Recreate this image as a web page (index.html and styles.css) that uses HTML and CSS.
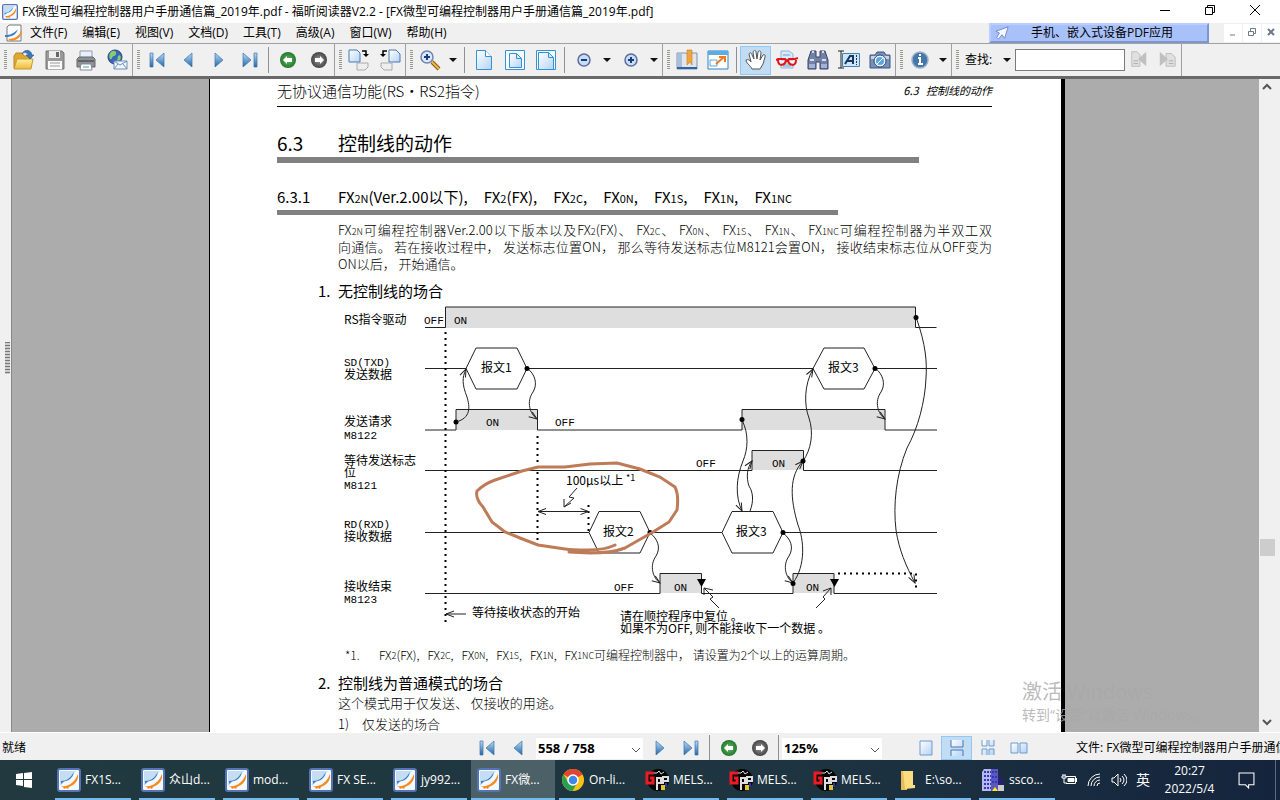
FILE: index.html
```html
<!DOCTYPE html>
<html lang="zh-CN">
<head>
    <meta charset="UTF-8">
    <meta name="viewport" content="width=device-width, initial-scale=1.0">
    <title>FX微型可编程控制器用户手册通信篇_2019年.pdf - 福昕阅读器V2.2</title>
    <link rel="stylesheet" href="styles.css">
</head>
<body>
<svg class="defs" aria-hidden="true">
    <defs>
        <linearGradient id="blue" x1="0" y1="0" x2="0" y2="1"><stop offset="0" stop-color="#b9dcf6"/><stop offset="1" stop-color="#2267a8"/></linearGradient>
        <linearGradient id="paper" x1="0" y1="0" x2="1" y2="1"><stop offset="0" stop-color="#fff"/><stop offset="1" stop-color="#b4d3f5"/></linearGradient>
        <linearGradient id="gold" x1="0" y1="0" x2="0" y2="1"><stop offset="0" stop-color="#fff0a0"/><stop offset="1" stop-color="#eeb93a"/></linearGradient>
        <radialGradient id="green"><stop offset="0" stop-color="#69bc66"/><stop offset="1" stop-color="#23762f"/></radialGradient>
        <radialGradient id="gray"><stop offset="0" stop-color="#999"/><stop offset="1" stop-color="#444"/></radialGradient>
        <marker id="tip" viewBox="0 0 10 10" refX="9" refY="5" markerWidth="10" markerHeight="10" orient="auto-start-reverse" markerUnits="userSpaceOnUse"><path d="M1 2L9 5L1 8" fill="none" stroke="#222"/></marker>
    </defs>
    <symbol id="foxit" viewBox="0 0 24 24"><rect x="1" y="1" width="22" height="22" rx="2" fill="#f4f9fd" stroke="#5573b8" stroke-width="2"/><path d="M3 3h16L3 18z" fill="#c5ddf3"/><path d="M4 13c6 0 9-3 13-9-1 5-4 8-8 9-2 0-3 1-5 3z" fill="#3c7cc4"/><path d="M4 18c8 1 14-4 17-12 1 6-3 11-9 13l-1 2-2-1-2 1-1-2z" fill="#f58a1f"/></symbol>
    <symbol id="pdf" viewBox="0 0 20 18"><path d="M5 1h12v16H3V3z" fill="#fff" stroke="#777"/><path d="M1 11c6 0 9-2 13-6-2 6-6 8-13 8z" fill="#3c7cc4"/><path d="M4 15c7 0 11-3 14-9 0 6-4 10-11 11z" fill="#f58a1f"/></symbol>
    <symbol id="open" viewBox="0 0 22 22"><path d="M1 7l2-3h6l2 3h7v12H1z" fill="#e0a92d" stroke="#b4872b"/><path d="M1 20l3-10h16l-2 10z" fill="url(#gold)" stroke="#c89a35"/><path d="M9 5c2-5 9-5 10 1h2l-4 4-4-4h2c-1-3-4-3-6-1z" fill="#3e77b8" stroke="#1c4e8b" stroke-width=".5"/></symbol>
    <symbol id="save" viewBox="0 0 22 22"><path d="M2 2h16l2 2v16H2z" fill="#999" stroke="#777"/><path d="M5 2h11v7H5z" fill="#eee"/><path d="M12 3h3v5h-3z" fill="#666"/><path d="M4 12h14v8H4z" fill="#fafafa"/><path d="M6 14h10M6 17h10" stroke="#999"/></symbol>
    <symbol id="print" viewBox="0 0 22 22"><path d="M5 2h12v7H5z" fill="#e6f1fa" stroke="#99a"/><path d="M2 10l2-2h14l2 2v8H2z" fill="#8b9198" stroke="#666"/><path d="M3 12h16" stroke="#555" stroke-width="1.500"/><path d="M6 15h10l1 6H5z" fill="#fff" stroke="#889"/><path d="M8 18h6" stroke="#39a6a7"/></symbol>
    <symbol id="mail" viewBox="0 0 22 22"><circle cx="9" cy="8" r="7" fill="#3867b7" stroke="#27417c"/><path d="M4 4c3-4 7-2 6 1s-3 1-4 4-4 0-2-5zM12 7c2-2 4 1 2 4l-3 1z" fill="#86cc70"/><path d="M8 12h13v8H8z" fill="#eef5ff" stroke="#6f8fb8"/><path d="M8 12l6 4 7-4M8 20l4-5m9 5l-4-5" fill="none" stroke="#6f8fb8"/></symbol>
    <symbol id="prev" viewBox="0 0 22 22"><path d="M15 4v14L7 11z" fill="url(#blue)" stroke="#3b73aa" stroke-width=".7"/></symbol>
    <symbol id="next" viewBox="0 0 22 22"><path d="M7 4v14l8-7z" fill="url(#blue)" stroke="#3b73aa" stroke-width=".7"/></symbol>
    <symbol id="first" viewBox="0 0 22 22"><path d="M4 4h3v14H4zM18 4v14l-8-7z" fill="url(#blue)" stroke="#3b73aa" stroke-width=".7"/></symbol>
    <symbol id="last" viewBox="0 0 22 22"><path d="M15 4h3v14h-3zM4 4v14l8-7z" fill="url(#blue)" stroke="#3b73aa" stroke-width=".7"/></symbol>
    <symbol id="back" viewBox="0 0 22 22"><circle cx="11" cy="11" r="8" fill="url(#green)"/><path d="M6 11l4-4v2h5v4h-5v2z" fill="#fff"/></symbol>
    <symbol id="fwd" viewBox="0 0 22 22"><circle cx="11" cy="11" r="8" fill="url(#gray)"/><path d="M16 11l-4-4v2H7v4h5v2z" fill="#fff"/></symbol>
    <symbol id="turnr" viewBox="0 0 22 22"><path d="M1 1h8l3 3v9H1z" fill="url(#paper)" stroke="#4679b4"/><path d="M9 14h11v4l-3 3H9z" fill="#eee" stroke="#aaa"/><path d="M14 2h4v5" fill="none" stroke="#000" stroke-width="1.500"/><path d="M15 5h6l-3 3z"/></symbol>
    <symbol id="turnl" viewBox="0 0 22 22"><path d="M10 1h7l4 4v8H10z" fill="url(#paper)" stroke="#4679b4"/><path d="M2 14h11v7H5l-3-3z" fill="#eee" stroke="#aaa"/><path d="M8 2H4v5" fill="none" stroke="#000" stroke-width="1.500"/><path d="M1 5h6L4 8z"/></symbol>
    <symbol id="zoom" viewBox="0 0 22 22"><path d="M13 13l7 7" stroke="#8a5a16" stroke-width="4"/><path d="M13 13l7 7" stroke="#efb944" stroke-width="2"/><circle cx="8" cy="8" r="6" fill="#d9ebfb" stroke="#7183ac" stroke-width="1.500"/><path d="M5 8h6M8 5v6" stroke="#1d3b86" stroke-width="2"/></symbol>
    <symbol id="page" viewBox="0 0 22 22"><path d="M3.500 1.500h9l6 6v13h-15z" fill="url(#paper)" stroke="#3492d5"/><path d="M12.500 1.500v6h6" fill="#fff" stroke="#3492d5"/></symbol>
    <symbol id="fitpage" viewBox="0 0 22 22"><path d="M1.500 1.500h19v19h-19z" fill="#f5fbff" stroke="#3492d5"/><path d="M5.500 4.500h7l5 5v9h-12z" fill="url(#paper)" stroke="#3492d5"/><path d="M12.500 4.500v5h5" fill="none" stroke="#3492d5"/></symbol>
    <symbol id="fitwidth" viewBox="0 0 22 22"><path d="M1.500 1.500h19v19h-19z" fill="#f5fbff" stroke="#3492d5"/><path d="M3.500 3.500h10l5 5v12h-15z" fill="url(#paper)" stroke="#3492d5"/><path d="M13.500 3.500v5h5" fill="none" stroke="#3492d5"/></symbol>
    <symbol id="minus" viewBox="0 0 22 22"><circle cx="11" cy="11" r="6" fill="#c9def3" stroke="#5a6f9b" stroke-width="1.500"/><path d="M8 11h6" stroke="#173a81" stroke-width="2"/></symbol>
    <symbol id="plus" viewBox="0 0 22 22"><circle cx="11" cy="11" r="6" fill="#c9def3" stroke="#5a6f9b" stroke-width="1.500"/><path d="M8 11h6M11 8v6" stroke="#173a81" stroke-width="2"/></symbol>
    <symbol id="bookmark" viewBox="0 0 22 22"><path d="M1 4h9l1 1 1-1h9v16H1z" fill="#e2e6ec" stroke="#7d93b3"/><path d="M1 18h20v2H1z" fill="#2f65a8"/><path d="M2 5h4v13H2z" fill="#a6c0de"/><path d="M11 1h5v15l-2-3-3 3z" fill="#f0a63c" stroke="#c98835" stroke-width=".7"/></symbol>
    <symbol id="full" viewBox="0 0 22 22"><path d="M1 2h20v18H1z" fill="#fff" stroke="#2c83c8"/><path d="M1 2h20v4H1z" fill="#5eabdf"/><path d="M3 11h7v6H3z" fill="#fff" stroke="#58a8dc"/><path d="M9 15l8-7M12 8h6v5" fill="none" stroke="#f07820" stroke-width="2"/></symbol>
    <symbol id="hand" viewBox="0 0 22 22"><path d="M7 20C5 16 1 14 1 11c2-1 4 0 5 2L4 5c1-2 3-1 3 1l2 4-1-7c1-2 3-2 3 0l1 7 1-7c1-2 3-1 3 1l-1 7 3-5c1-1 3 0 2 2l-2 7-3 5z" fill="#fff" stroke="#555"/></symbol>
    <symbol id="glasses" viewBox="0 0 22 22"><path d="M5 2h8l4 3v6H5zM5 15h12v4H5z" fill="#d7eaf8" stroke="#8bb4d8"/><path d="M7 6h7M7 17h8" stroke="#6aa2cf"/><path d="M0 11l2-1h7l2 2 2-2h6l3-1M2 11c0 7 7 6 8 0m2 0c1 6 8 7 8 0" fill="none" stroke="#e1161c" stroke-width="2"/></symbol>
    <symbol id="binoc" viewBox="0 0 22 22"><path d="M4 2h5v6h4V2h5l3 9v9h-8v-7H9v7H1v-9z" fill="#7381a4" stroke="#39436a"/><path d="M5 3h2M15 3h2M3 11h4M15 11h4" stroke="#d6def0" stroke-width="2"/><path d="M2 15h6v4H2zM14 15h6v4h-6z" fill="#a2b2d4"/></symbol>
    <symbol id="seltext" viewBox="0 0 22 22"><path d="M0 2h6M3 2v17M0 19h6" stroke="#222" fill="none"/><path d="M4.500 4.500h17v13h-17z" fill="#cbe6fa" stroke="#4083bb"/><path d="M7 15l5-8h3v8M9 12h5" fill="none" stroke="#163861" stroke-width="2"/><path d="M18.500 6v10" stroke="#333" stroke-dasharray="2 1"/></symbol>
    <symbol id="camera" viewBox="0 0 22 22"><path d="M1 6h5l2-3h7l2 3h4v13H1z" fill="#7790b6" stroke="#3c5682"/><path d="M2 7h18v3H2z" fill="#c5d4e8"/><circle cx="11" cy="12" r="6" fill="#e9f2fa" stroke="#304771"/><circle cx="11" cy="12" r="4" fill="#5aa6de"/><path d="M8 15l6-6" stroke="#fff"/></symbol>
    <symbol id="info" viewBox="0 0 22 22"><circle cx="11" cy="11" r="8" fill="#4677ab" stroke="#9ab2cb" stroke-width="1.500"/><path d="M11 5v2M9 9h2v6M9 15h5" fill="none" stroke="#fff" stroke-width="2"/></symbol>
    <symbol id="findprev" viewBox="0 0 22 22"><path d="M3 3h6l3 3v13H3z" fill="#e0e0e0" stroke="#bbb"/><path d="M19 3v16l-9-8z" fill="#c0c0c0"/><path d="M5 13h5M5 16h5" stroke="#aaa"/></symbol>
    <symbol id="findnext" viewBox="0 0 22 22"><path d="M10 5h6l4 4v10H10z" fill="#e0e0e0" stroke="#bbb"/><path d="M3 3v16l9-8z" fill="#c0c0c0"/><path d="M13 13h5M13 16h5" stroke="#aaa"/></symbol>
    <symbol id="single" viewBox="0 0 22 22"><path d="M5 4h12v14H5z" fill="url(#paper)" stroke="#6d9bd0"/></symbol>
    <symbol id="cont" viewBox="0 0 22 22"><path d="M5 3v7h12V3M5 19v-6h12v6" fill="url(#paper)" stroke="#4679b4"/></symbol>
    <symbol id="facing" viewBox="0 0 22 22"><path d="M5 3v6h5V3M12 3v6h5V3M5 18v-6h5v6M12 18v-6h5v6" fill="url(#paper)" stroke="#6d9bd0"/></symbol>
    <symbol id="two" viewBox="0 0 22 22"><path d="M3 6h7v10H3zM12 6h7v10h-7z" fill="url(#paper)" stroke="#6d9bd0"/></symbol>
    <symbol id="chrome" viewBox="0 0 24 24"><circle cx="12" cy="12" r="11" fill="#fbc116"/><path d="M12 12L2.500 6.500a11 11 0 0 1 19 0z" fill="#df4434"/><path d="M2.500 6.500a11 11 0 0 0 9 16.500l5-8.500H7.500z" fill="#2a9f51"/><circle cx="12" cy="12" r="5" fill="#4285e8" stroke="#fff" stroke-width="1.500"/></symbol>
    <symbol id="gpp" viewBox="0 0 24 24"><circle cx="13" cy="12" r="11" fill="#050505"/><path d="M9 5h3l2-2 2 3 3-2" stroke="#ddd" fill="none"/><path d="M9 5H2v10h6v-5H5" fill="none" stroke="#ed1c24" stroke-width="3"/><path d="M12 22V10h4v5h-4M18 16V9h5v4h-5" fill="none" stroke="#ddd" stroke-width="2"/><path d="M16 17h4v5h-4z" fill="#e5c520"/><path d="M20 15h2v4h-2z" fill="#2737b8"/></symbol>
    <symbol id="folder" viewBox="0 0 24 24"><path d="M4 3h6v19H4z" fill="#e9bd55"/><path d="M6 3h10v14h2v3l-10 1z" fill="#fbdc7e"/></symbol>
    <symbol id="sscom" viewBox="0 0 24 24"><path d="M3 1h8v22H1V4z" fill="#b6b9ec"/><path d="M10 1h7v22h-7z" fill="#5d59b8"/><path d="M17 6l6 7v10h-6z" fill="#23236b"/><path d="M3 4h7M3 8h7M3 12h7M3 16h7M3 20h7M11 4h5M11 9h5M11 14h5" stroke="#3337c9" stroke-dasharray="2 1" stroke-width="2"/><path d="M17 17h6v6h-6z" fill="#ccc"/><path d="M11 23l3-4 3 4z" fill="#ffee20"/></symbol>
</svg>

<header class="titlebar">
    <svg class="app-icon"><use href="#foxit"/></svg>
    <span class="title">FX微型可编程控制器用户手册通信篇_2019年.pdf - 福昕阅读器V2.2 - [FX微型可编程控制器用户手册通信篇_2019年.pdf]</span>
    <button class="win" aria-label="最小化"><svg viewBox="0 0 12 12"><path d="M1 6.500h10"/></svg></button>
    <button class="win" aria-label="还原"><svg viewBox="0 0 12 12"><path d="M1.500 3.500h7v7h-7zM3.500 3V1.500h7v7H9"/></svg></button>
    <button class="win" aria-label="关闭"><svg viewBox="0 0 12 12"><path d="M1 1l10 10M11 1L1 11"/></svg></button>
</header>

<nav class="menubar">
    <svg class="doc-icon"><use href="#pdf"/></svg>
    <button>文件(F)</button>
    <button>编辑(E)</button>
    <button>视图(V)</button>
    <button>文档(D)</button>
    <button>工具(T)</button>
    <button>高级(A)</button>
    <button>窗口(W)</button>
    <button>帮助(H)</button>
    <a class="banner" href="#"><svg viewBox="0 0 16 16"><path d="M15 1L1 6l4 2-3 5 2 2 4-5 3 4z" fill="#f5f8ff" stroke="#6b7fd0"/></svg><span>手机、嵌入式设备PDF应用</span></a>
    <div class="mdi">
        <button aria-label="最小化文档"><svg viewBox="0 0 10 10"><path d="M2 8h5"/></svg></button>
        <button aria-label="还原文档"><svg viewBox="0 0 10 10"><path d="M1.500 4.500h5v4h-5zM3.500 4V1.500h5v5H7"/></svg></button>
        <button aria-label="关闭文档"><svg viewBox="0 0 10 10"><path d="M2 2l6 6M8 2L2 8" stroke-width="2"/></svg></button>
    </div>
</nav>

<div class="toolbar">
    <div class="group">
        <button class="tool" aria-label="打开"><svg><use href="#open"/></svg></button>
        <button class="tool" aria-label="保存"><svg><use href="#save"/></svg></button>
        <button class="tool" aria-label="打印"><svg><use href="#print"/></svg></button>
        <button class="tool" aria-label="邮件"><svg><use href="#mail"/></svg></button>
    </div>
    <div class="group">
        <button class="tool" aria-label="第一页"><svg><use href="#first"/></svg></button>
        <button class="tool" aria-label="上一页"><svg><use href="#prev"/></svg></button>
        <button class="tool" aria-label="下一页"><svg><use href="#next"/></svg></button>
        <button class="tool" aria-label="最后一页"><svg><use href="#last"/></svg></button>
        <i class="sep"></i>
        <button class="tool" aria-label="后退"><svg><use href="#back"/></svg></button>
        <button class="tool" aria-label="前进"><svg><use href="#fwd"/></svg></button>
    </div>
    <div class="group">
        <button class="tool" aria-label="顺时针旋转"><svg><use href="#turnr"/></svg></button>
        <button class="tool" aria-label="逆时针旋转"><svg><use href="#turnl"/></svg></button>
    </div>
    <div class="group">
        <button class="tool" aria-label="缩放工具"><svg><use href="#zoom"/></svg></button>
        <button class="drop" aria-label="缩放选项"></button>
        <i class="sep"></i>
        <button class="tool" aria-label="实际大小"><svg><use href="#page"/></svg></button>
        <button class="tool" aria-label="适合页面"><svg><use href="#fitpage"/></svg></button>
        <button class="tool" aria-label="适合宽度"><svg><use href="#fitwidth"/></svg></button>
        <i class="sep"></i>
        <button class="tool" aria-label="缩小"><svg><use href="#minus"/></svg></button>
        <button class="drop" aria-label="缩小选项"></button>
        <button class="tool" aria-label="放大"><svg><use href="#plus"/></svg></button>
        <button class="drop" aria-label="放大选项"></button>
    </div>
    <div class="group">
        <button class="tool" aria-label="书签"><svg><use href="#bookmark"/></svg></button>
        <button class="tool" aria-label="全屏"><svg><use href="#full"/></svg></button>
        <i class="sep"></i>
        <button class="tool active" aria-label="手形工具"><svg><use href="#hand"/></svg></button>
        <button class="tool" aria-label="阅读"><svg><use href="#glasses"/></svg></button>
        <button class="tool" aria-label="查找"><svg><use href="#binoc"/></svg></button>
        <button class="tool" aria-label="选择文本"><svg><use href="#seltext"/></svg></button>
        <button class="tool" aria-label="快照"><svg><use href="#camera"/></svg></button>
    </div>
    <div class="group">
        <button class="tool" aria-label="信息"><svg><use href="#info"/></svg></button>
        <button class="drop" aria-label="信息选项"></button>
    </div>
    <div class="group find">
        <label for="find">查找:</label>
        <button class="drop" aria-label="查找选项"></button>
        <input type="text" id="find">
        <button class="mini" aria-label="查找上一个"><svg><use href="#findprev"/></svg></button>
        <button class="mini" aria-label="查找下一个"><svg><use href="#findnext"/></svg></button>
    </div>
</div>

<main class="viewer">
    <div class="splitter"><i></i></div>
    <div class="canvas">
        <article class="page">
            <div class="running"><span>无协议通信功能(RS・RS2指令)</span><em>6.3&nbsp;&nbsp; 控制线的动作</em></div>
            <h2><span class="num">6.3</span>控制线的动作</h2>
            <h3><span class="num">6.3.1</span><span class="models"><span>FX<small>2N</small>(Ver.2.00以下),</span> <span>FX<small>2</small>(FX),</span> <span>FX<small>2C</small>,</span> <span>FX<small>0N</small>,</span> <span>FX<small>1S</small>,</span> <span>FX<small>1N</small>,</span> <span>FX<small>1NC</small></span></span></h3>
            <div class="intro">
                <p>FX<small>2N</small>可编程控制器Ver.2.00以下版本以及FX<small>2</small>(FX)、 FX<small>2C</small>、 FX<small>0N</small>、 FX<small>1S</small>、 FX<small>1N</small>、 FX<small>1NC</small>可编程控制器为半双工双</p>
                <p>向通信。 若在接收过程中， 发送标志位置ON， 那么等待发送标志位M8121会置ON， 接收结束标志位从OFF变为</p>
                <p class="end">ON以后， 开始通信。</p>
            </div>
            <h4><span>1.</span>无控制线的场合</h4>

            <svg class="timing" viewBox="338 302 620 340">
                <g class="level">
                    <path d="M445.500 307h470v21h-470zM456 409.500h81.500V430H456zM742 409.500h143V430H742zM752 450.500h51.500V470H752zM660 573h41.500v20H660zM793 573h41v20h-41z"/>
                </g>
                <g class="line">
                    <path d="M425 327.500h20.500V307h470v20.500h21"/>
                    <path d="M425 368.500h41l10-20.500h41l10 20.500-10 20.500h-41l-10-20.500M527 368.500h286l11-20.500h40l11 20.500-11 20.500h-40l-11-20.500M875 368.500h62"/>
                    <path d="M425 430h31v-20.500h81.500V430H742v-20.500h143V430h52"/>
                    <path d="M425 470.500h327v-20h51.500v20H937"/>
                    <path d="M425 532.500h164l10-21h41l10 21-10 20.500h-41l-10-20.500M650 532.500h72l10-21h41l10 21-10 20.500h-41l-10-20.500M783 532.500h154"/>
                    <path d="M425 593.500h235V573.500h41.500v20H793v-20h41v20h103"/>
                    <path d="M577 488l-8 9 5 1-10 9M564 499v8l7-4M719 608l-9-9 3-2-9-9M704 595v-7l9 2M816 608l9-9-2-2 8-9M823 591l8-3v7"/>
                </g>
                <g class="dots">
                    <path d="M445.500 332v290M537.500 436v106M588.500 505v28M838 573.500h78v16"/>
                </g>
                <g class="arrow">
                    <path d="M456 422C471 418 470 407 467 397C462 384 462 378 466 369"/>
                    <path d="M527 368C535 374 538 384 533 392C526 402 530 414 537 419"/>
                    <path d="M916 317C926 345 927 362 926 378C925 402 918 428 907 448C896 475 893 505 896 530C899 550 906 566 915 583"/>
                    <path d="M742 420C749 434 748 449 743 461C736 478 735 496 742 511"/>
                    <path d="M750 511C754 501 753 492 749 486C746 477 747 468 752 461"/>
                    <path d="M803 461C811 450 814 433 809 418C804 405 804 385 813 369"/>
                    <path d="M875 368C883 374 886 384 881 392C874 402 878 414 885 419"/>
                    <path d="M650 533C658 539 661 548 656 556C649 566 653 578 660 583"/>
                    <path d="M783 533C791 539 794 548 789 556C782 566 786 578 793 583"/>
                    <path d="M793 583C806 565 804 540 798 525C790 498 789 476 803 461"/>
                    <path d="M466 614h-20"/>
                    <path class="both" d="M538 511.500h50.500"/>
                </g>
                <g class="dot">
                    <circle cx="456" cy="422" r="2.500"/><circle cx="527" cy="368.500" r="2.500"/><circle cx="916" cy="317.500" r="2.500"/><circle cx="742" cy="419.500" r="2.500"/><circle cx="803" cy="461" r="2.500"/><circle cx="875" cy="368.500" r="2.500"/><circle cx="650" cy="532.500" r="2.500"/><circle cx="783" cy="532.500" r="2.500"/><circle cx="793" cy="583.500" r="2.500"/>
                    <path d="M697 579h9l-4.500 8zM830 579h9l-4.500 8z"/>
                </g>
                <g class="label">
                    <text x="344" y="324">RS指令驱动</text>
                    <text x="344" y="366" class="mono">SD(TXD)</text><text x="344" y="379">发送数据</text>
                    <text x="344" y="426">发送请求</text><text x="344" y="439" class="mono">M8122</text>
                    <text x="344" y="465">等待发送标志</text><text x="344" y="477">位</text><text x="344" y="489" class="mono">M8121</text>
                    <text x="344" y="528" class="mono">RD(RXD)</text><text x="344" y="541">接收数据</text>
                    <text x="344" y="591">接收结束</text><text x="344" y="603" class="mono">M8123</text>
                    <text x="424" y="324" class="mono">OFF</text><text x="454" y="324" class="mono">ON</text>
                    <text x="481" y="372">报文1</text><text x="828" y="372">报文3</text>
                    <text x="486" y="426" class="mono">ON</text><text x="555" y="426" class="mono">OFF</text>
                    <text x="696" y="467" class="mono">OFF</text><text x="772" y="467" class="mono">ON</text>
                    <text x="566" y="485">100μs以上</text><text x="626" y="481" class="sup">*1</text>
                    <text x="603" y="536">报文2</text><text x="736" y="536">报文3</text>
                    <text x="614" y="591" class="mono">OFF</text><text x="674" y="591" class="mono">ON</text><text x="806" y="591" class="mono">ON</text>
                    <text x="472" y="617">等待接收状态的开始</text>
                    <text x="620" y="621">请在顺控程序中复位 。</text>
                    <text x="620" y="633">如果不为OFF, 则不能接收下一个数据 。</text>
                </g>
                <path class="pen" d="M615 545Q605 550 588 550T565 549L538 545L520 538L505 532L492 522L483 507Q475 498 477 491Q484 484 495 480L522 471L538 467H565L590 464L617 463L640 469L660 477L675 487Q679 495 677 510L669 522L653 532L625 548Q612 553 590 553L569 552"/>
            </svg>

            <p class="note"><span>*1.</span>FX<small>2</small>(FX),   FX<small>2C</small>,   FX<small>0N</small>,   FX<small>1S</small>,   FX<small>1N</small>,   FX<small>1NC</small>可编程控制器中， 请设置为2个以上的运算周期。</p>
            <h4 class="next"><span>2.</span>控制线为普通模式的场合</h4>
            <p class="text">这个模式用于仅发送、 仅接收的用途。</p>
            <p class="text item"><span>1)</span>仅发送的场合</p>
        </article>
        <div class="watermark"><div>激活 Windows</div><p>转到“设置”以激活 Windows。</p></div>
    </div>
    <div class="scroll">
        <button aria-label="向上"><svg viewBox="0 0 10 10"><path d="M1 7l4-4 4 4"/></svg></button>
        <i class="thumb"></i>
        <button aria-label="向下"><svg viewBox="0 0 10 10"><path d="M1 3l4 4 4-4"/></svg></button>
    </div>
</main>

<footer class="status">
    <span class="ready">就绪</span>
    <button class="tool" aria-label="第一页"><svg><use href="#first"/></svg></button>
    <button class="tool" aria-label="上一页"><svg><use href="#prev"/></svg></button>
    <div class="combo pages">
        <select aria-label="页码"><option>558 / 758</option></select>
        <svg viewBox="0 0 10 10"><path d="M1 3l4 4 4-4"/></svg>
    </div>
    <button class="tool" aria-label="下一页"><svg><use href="#next"/></svg></button>
    <button class="tool" aria-label="最后一页"><svg><use href="#last"/></svg></button>
    <i class="sep"></i>
    <button class="tool" aria-label="后退"><svg><use href="#back"/></svg></button>
    <button class="tool" aria-label="前进"><svg><use href="#fwd"/></svg></button>
    <i class="sep"></i>
    <div class="combo">
        <select aria-label="缩放"><option>125%</option></select>
        <svg viewBox="0 0 10 10"><path d="M1 3l4 4 4-4"/></svg>
    </div>
    <div class="views">
        <button class="tool" aria-label="单页"><svg><use href="#single"/></svg></button>
        <button class="tool active" aria-label="连续"><svg><use href="#cont"/></svg></button>
        <button class="tool" aria-label="连续对开"><svg><use href="#facing"/></svg></button>
        <button class="tool" aria-label="对开"><svg><use href="#two"/></svg></button>
    </div>
    <span class="file">文件: FX微型可编程控制器用户手册通信篇_2019年.pdf</span>
</footer>

<div class="taskbar">
    <button class="start" aria-label="开始"><svg viewBox="0 0 16 16"><path d="M0 2l7-1v6H0zM8 1l8-1v7H8zM0 8h7v6l-7-1zM8 8h8v8l-8-1z" fill="#fff"/></svg></button>
    <div class="tasks">
        <button><svg><use href="#foxit"/></svg><span>FX1S...</span></button>
        <button><svg><use href="#foxit"/></svg><span>众山d...</span></button>
        <button><svg><use href="#foxit"/></svg><span>mod...</span></button>
        <button><svg><use href="#foxit"/></svg><span>FX SE...</span></button>
        <button><svg><use href="#foxit"/></svg><span>jy992...</span></button>
        <button class="current"><svg><use href="#foxit"/></svg><span>FX微...</span></button>
        <button><svg><use href="#chrome"/></svg><span>On-li...</span></button>
        <button><svg><use href="#gpp"/></svg><span>MELS...</span></button>
        <button><svg><use href="#gpp"/></svg><span>MELS...</span></button>
        <button><svg><use href="#gpp"/></svg><span>MELS...</span></button>
        <button><svg><use href="#folder"/></svg><span>E:\so...</span></button>
        <button><svg><use href="#sscom"/></svg><span>ssco...</span></button>
    </div>
    <div class="tray">
        <svg viewBox="0 0 16 16"><path d="M5 4.500h9.500v7H5M15.500 6v4"/><path d="M7 6.500h6v3H7z" fill="#fff"/><path d="M1 4v2h4V4zM3 6v5h3M2 2v2M4 2v2"/></svg>
        <svg viewBox="0 0 16 16"><path d="M2 14A12 12 0 0 1 14 2M5 14a9 9 0 0 1 9-9M8 14a6 6 0 0 1 6-6M11 14a3 3 0 0 1 3-3"/></svg>
        <svg viewBox="0 0 16 16"><path d="M1 6h2l4-4v12l-4-4H1zM9 6q2 2 0 4M11 4q4 4 0 8M13 2q6 6 0 12"/></svg>
        <span>英</span>
    </div>
    <div class="clock"><time>20:27</time><span>2022/5/4</span></div>
    <button class="notice" aria-label="通知"><svg viewBox="0 0 16 16"><path d="M1 1h14v11h-5v3l-3-3H1z" fill="none" stroke="#fff"/></svg></button>
    <i class="desktop"></i>
</div>
</body>
</html>
```
FILE: styles.css
```css
* {
    box-sizing: border-box;
}

body, button, input, select {
    font-family: 'Open Sans', 'Noto Sans CJK SC', sans-serif;
    font-size: 12px;
    line-height: 16px;
    color: #000;
}

body {
    display: flex;
    flex-direction: column;
    height: 100vh;
    margin: 0;
    overflow: hidden;
    background-color: #f0f0f0;
}

button {
    border: 0;
    padding: 0;
    background: none;
}

h2, h3, h4, p {
    margin: 0;
}

h2, h3, h4 {
    font-weight: normal;
}

.defs {
    position: absolute;
    width: 0;
    height: 0;
}

/* title and menus */
.titlebar {
    display: flex;
    align-items: center;
    flex: 0 0 23px;
    background-color: #fff;
}

.app-icon {
    width: 16px;
    height: 16px;
    margin: 0 4px 0 2px;
}

.title {
    flex: 1;
    white-space: nowrap;
}

.win {
    width: 45px;
    height: 22px;
}

.win svg {
    width: 12px;
    height: 12px;
    fill: none;
    stroke: #000;
}

.titlebar .win:last-child {
    margin-right: 3px;
}

.menubar {
    display: flex;
    align-items: center;
    flex: 0 0 20px;
    gap: 15px;
}

.doc-icon {
    width: 20px;
    height: 18px;
    margin: 0 -9px 0 4px;
}

.banner {
    display: flex;
    align-items: center;
    width: 220px;
    height: 20px;
    margin-left: auto;
    border: 2px solid;
    border-color: #bdcdff #7d96d0 #7d96d0 #bdcdff;
    background-color: #a9c1fb;
    color: #000;
    text-decoration: none;
}

.banner svg {
    width: 14px;
    height: 14px;
    margin-left: 4px;
}

.banner span {
    flex: 1;
    padding-right: 12px;
    text-align: center;
}

.mdi {
    display: flex;
    gap: 1px;
}

.mdi button {
    width: 18px;
    height: 18px;
    background-color: #fff;
}

.mdi svg {
    width: 10px;
    height: 10px;
    fill: none;
    stroke: #6c7a89;
}

/* toolbars */
.toolbar {
    display: flex;
    flex: 0 0 33px;
    border-top: 1px solid #a0a0a0;
}

.group {
    display: flex;
    align-items: center;
    border-right: 1px solid #a0a0a0;
}

.group::before {
    content: '';
    width: 3px;
    height: 20px;
    margin: 0 1px 0 4px;
    background: repeating-linear-gradient(#9a9a8c 0 1px, #f0f0f0 1px 2px);
}

.tool {
    display: flex;
    align-items: center;
    justify-content: center;
    width: 31px;
    height: 29px;
}

.tool svg {
    width: 22px;
    height: 22px;
}

.active {
    border: 1px solid #90c8f6;
    background-color: #c2dcf3;
}

.sep {
    width: 1px;
    height: 26px;
    margin: 0 3px;
    background-color: #909090;
}

.drop {
    width: 16px;
    height: 20px;
}

.drop::before {
    content: '';
    display: block;
    width: 0;
    margin: auto;
    border: 4px solid transparent;
    border-top-color: #111;
    border-bottom: 0;
}

.find label {
    margin: 0 7px 0 5px;
}

.find input {
    width: 110px;
    height: 22px;
    border: 1px solid #7a7a7a;
    background-color: #fff;
}

.mini {
    width: 28px;
    height: 22px;
}

.mini svg {
    width: 20px;
    height: 20px;
}

/* document area */
.viewer {
    display: flex;
    flex: 1;
    min-height: 0;
    border-top: 3px solid #696969;
    border-bottom: 1px solid #fff;
}

.splitter {
    display: flex;
    align-items: center;
    justify-content: flex-end;
    width: 12px;
    padding: 0 1px 96px 0;
    border-right: 1px solid #888;
}

.splitter i {
    width: 5px;
    height: 32px;
    background: repeating-linear-gradient(#777 0 1px, #ccc 1px 3px);
}

.canvas {
    position: relative;
    flex: 1;
    padding-left: 3px;
    overflow: hidden;
    background-color: #acacac;
}

.page {
    width: 856px;
    min-height: 100%;
    margin: 0 auto;
    padding: 0 69px 0 67px;
    border-left: 1px solid #000;
    border-right: 4px solid #000;
    background-color: #fff;
    font-family: 'Noto Sans CJK SC', sans-serif;
    font-size: 13px;
    line-height: 17px;
}

.running {
    display: flex;
    justify-content: space-between;
    border-bottom: 1px solid #000;
    padding-bottom: 4px;
    font-size: 15px;
    font-weight: 300;
    line-height: 23px;
}

.running em {
    font-size: 11px;
    font-weight: normal;
}

h2 {
    display: flex;
    width: 642px;
    margin-top: 23px;
    border-bottom: 6px solid #808080;
    padding-bottom: 2px;
    font-size: 19px;
    line-height: 25px;
}

.num {
    width: 61px;
}

h3 {
    display: flex;
    width: 561px;
    margin-top: 21px;
    border-bottom: 5px solid #808080;
    padding-bottom: 1px;
    font-size: 15px;
    line-height: 25px;
}

.models {
    display: flex;
    flex: 1;
    justify-content: space-between;
    padding-right: 46px;
}

small {
    font-size: 11px;
    line-height: 1px;
}

.intro {
    padding: 6px 0 0 61px;
    font-weight: 300;
}

.intro p {
    text-align: justify;
    text-align-last: justify;
    white-space: nowrap;
}

.intro .end {
    text-align-last: left;
}

.intro small {
    font-size: 9px;
}

h4 {
    display: flex;
    margin: 8px 0 0 41px;
    font-size: 15px;
    line-height: 22px;
}

h4 span {
    width: 20px;
}

h4.next {
    margin-top: 6px;
}

.timing {
    display: block;
    width: 620px;
    height: 340px;
    margin-left: 61px;
}

.level {
    fill: #dedede;
}

.line, .arrow {
    fill: none;
    stroke: #222;
}

.arrow path {
    marker-end: url(#tip);
}

.arrow .both {
    marker-start: url(#tip);
}

.dots {
    fill: none;
    stroke: #000;
    stroke-width: 2;
    stroke-dasharray: 2 4;
}

.label {
    font-size: 12px;
}

.label .mono {
    font-family: 'Liberation Mono', monospace;
    font-size: 11px;
}

.label .sup {
    font-size: 9px;
}

.pen {
    fill: none;
    stroke: #bd7b58;
    stroke-width: 3;
    stroke-linecap: round;
}

.note {
    display: flex;
    margin: 4px 0 0 68px;
    font-size: 12px;
    font-weight: 300;
    line-height: 18px;
    white-space: pre;
}

.note small {
    font-size: 9px;
    line-height: 20px;
}

.note span {
    width: 34px;
}

.text {
    margin-left: 61px;
    font-weight: 300;
}

.item {
    display: flex;
    margin-top: 4px;
}

.item span {
    width: 24px;
}

.watermark {
    position: absolute;
    right: 40px;
    bottom: 7px;
    width: 197px;
    color: rgba(168, 168, 168, 0.8);
    font-size: 14px;
    line-height: 20px;
    white-space: nowrap;
}

.watermark div {
    font-size: 20px;
    line-height: 26px;
}

.scroll {
    display: flex;
    flex-direction: column;
    align-items: center;
    width: 16px;
    margin-right: 5px;
}

.scroll button {
    width: 16px;
    height: 18px;
}

.scroll svg, .combo svg {
    width: 10px;
    height: 10px;
    fill: none;
    stroke: #555;
    stroke-width: 2;
}

.thumb {
    width: 15px;
    height: 17px;
    margin: 442px 0 auto;
    background-color: #cdcdcd;
}

/* status bar */
.status {
    display: flex;
    align-items: center;
    flex: 0 0 27px;
    overflow: hidden;
    padding-top: 3px;
}

.ready {
    width: 471px;
    padding-left: 2px;
}

.status .tool {
    flex: none;
    height: 24px;
}

.combo {
    position: relative;
    width: 100px;
    height: 21px;
}

.combo.pages {
    width: 107px;
    margin: 0 1px 0 3px;
}

.combo select {
    appearance: none;
    width: 100%;
    height: 21px;
    border: 0;
    padding: 0 2px;
    background-color: #fff;
    font-size: 13px;
    font-weight: bold;
}

.combo svg {
    position: absolute;
    right: 2px;
    top: 7px;
    stroke-width: 1;
}

.views {
    display: flex;
    margin: 0 42px 0 28px;
}

.file {
    flex: 1;
    overflow: hidden;
    white-space: nowrap;
}

/* taskbar */
.taskbar {
    display: flex;
    align-items: center;
    flex: 0 0 40px;
    background: linear-gradient(90deg, #21393f, #1e3541 60%, #14243d);
    color: #fff;
}

.start {
    width: 48px;
    height: 40px;
    margin-right: 3px;
}

.start svg {
    width: 16px;
    height: 16px;
    vertical-align: middle;
}

.tasks {
    display: flex;
    flex: 1;
}

.tasks button {
    position: relative;
    display: flex;
    align-items: center;
    gap: 4px;
    width: 84px;
    height: 40px;
    padding-left: 6px;
    color: #fff;
    white-space: nowrap;
}

.tasks svg {
    width: 24px;
    height: 24px;
}

.tasks button::after {
    content: '';
    position: absolute;
    left: 4px;
    right: 4px;
    bottom: 0;
    height: 2px;
    background-color: #76b9ed;
}

.tasks .current {
    background-color: #4b6067;
}

.tasks .current::after {
    left: 0;
    right: 0;
}

.tray {
    display: flex;
    align-items: center;
    gap: 9px;
    font-size: 14px;
}

.tray svg {
    width: 16px;
    height: 16px;
    fill: none;
    stroke: #fff;
}

.clock {
    display: flex;
    flex-direction: column;
    align-items: center;
    width: 79px;
    line-height: 18px;
}

.notice {
    width: 34px;
    height: 40px;
}

.notice svg {
    width: 17px;
    height: 17px;
    vertical-align: middle;
}

.desktop {
    width: 5px;
    height: 40px;
    margin-left: 12px;
    border-left: 1px solid #5d6b7c;
}
```
